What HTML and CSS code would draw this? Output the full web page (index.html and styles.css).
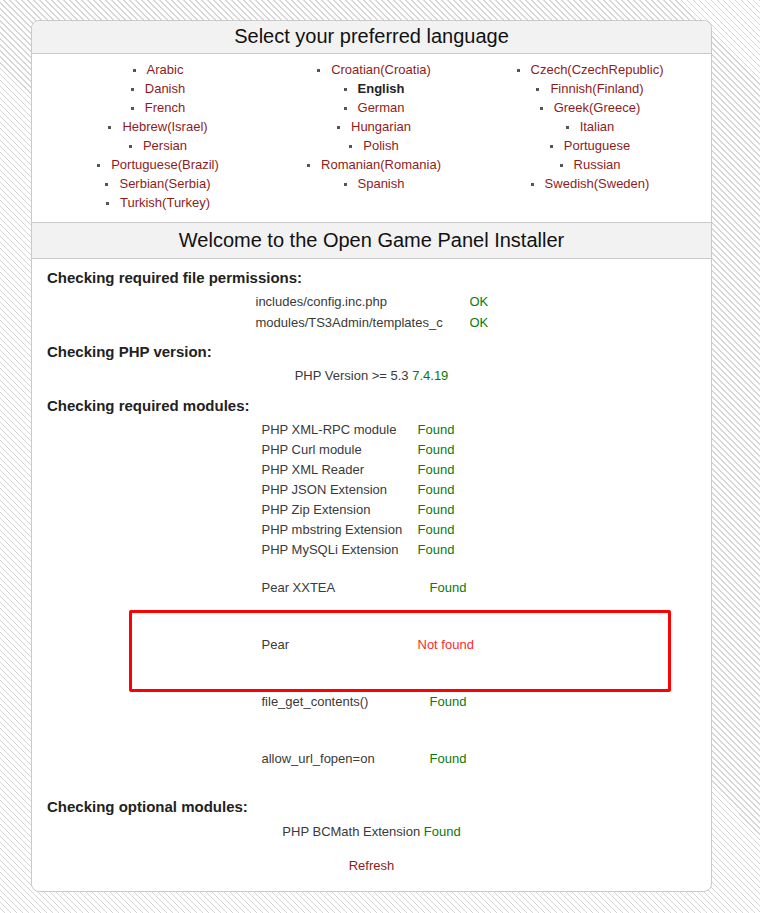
FILE: index.html
```html
<!DOCTYPE html>
<html lang="en">

<head>
    <meta charset="UTF-8">
    <meta name="viewport" content="width=device-width, initial-scale=1.0">
    <title>Open Game Panel Installer</title>
    <link rel="stylesheet" href="styles.css">
</head>

<body>
    <div class="page">
        <div class="panel">
            <div class="panel-head">Select your preferred language</div>
            <div class="langs">
                <ul>
                    <li><a href="#">Arabic</a></li>
                    <li><a href="#">Danish</a></li>
                    <li><a href="#">French</a></li>
                    <li><a href="#">Hebrew(Israel)</a></li>
                    <li><a href="#">Persian</a></li>
                    <li><a href="#">Portuguese(Brazil)</a></li>
                    <li><a href="#">Serbian(Serbia)</a></li>
                    <li><a href="#">Turkish(Turkey)</a></li>
                </ul>
                <ul>
                    <li><a href="#">Croatian(Croatia)</a></li>
                    <li class="current">English</li>
                    <li><a href="#">German</a></li>
                    <li><a href="#">Hungarian</a></li>
                    <li><a href="#">Polish</a></li>
                    <li><a href="#">Romanian(Romania)</a></li>
                    <li><a href="#">Spanish</a></li>
                </ul>
                <ul>
                    <li><a href="#">Czech(CzechRepublic)</a></li>
                    <li><a href="#">Finnish(Finland)</a></li>
                    <li><a href="#">Greek(Greece)</a></li>
                    <li><a href="#">Italian</a></li>
                    <li><a href="#">Portuguese</a></li>
                    <li><a href="#">Russian</a></li>
                    <li><a href="#">Swedish(Sweden)</a></li>
                </ul>
            </div>

            <div class="panel-head second">Welcome to the Open Game Panel Installer</div>
            <div class="checks">
                <h4 class="first">Checking required file permissions:</h4>
                <div class="results perms">
                    <span>includes/config.inc.php</span><span class="ok">OK</span>
                    <span>modules/TS3Admin/templates_c</span><span class="ok">OK</span>
                </div>

                <h4>Checking PHP version:</h4>
                <p class="line">PHP Version &gt;= 5.3 <span class="ok">7.4.19</span></p>

                <h4>Checking required modules:</h4>
                <div class="results modules">
                    <span>PHP XML-RPC module</span><span class="ok">Found</span>
                    <span>PHP Curl module</span><span class="ok">Found</span>
                    <span>PHP XML Reader</span><span class="ok">Found</span>
                    <span>PHP JSON Extension</span><span class="ok">Found</span>
                    <span>PHP Zip Extension</span><span class="ok">Found</span>
                    <span>PHP mbstring Extension</span><span class="ok">Found</span>
                    <span>PHP MySQLi Extension</span><span class="ok">Found</span>
                </div>

                <div class="results extra xxtea">
                    <span>Pear XXTEA</span><span class="ok">Found</span>
                </div>

                <div class="flagged">
                    <div class="results modules pear">
                        <span>Pear</span><span class="fail">Not found</span>
                    </div>
                    <div class="flag-box"></div>
                </div>

                <div class="results extra spaced">
                    <span>file_get_contents()</span><span class="ok">Found</span>
                </div>

                <div class="results extra spaced">
                    <span>allow_url_fopen=on</span><span class="ok">Found</span>
                </div>

                <h4 class="optional">Checking optional modules:</h4>
                <p class="line">PHP BCMath Extension <span class="ok">Found</span></p>

                <p class="refresh"><a href="#">Refresh</a></p>
            </div>
        </div>
    </div>
</body>

</html>
```

FILE: styles.css
```css
body {
    margin: 0;
    font-family: 'Liberation Sans', Arial, sans-serif;
    font-size: 13px;
    color: #3a3a3a;
    background-color: #fff;
    background-image: repeating-linear-gradient(45deg, #fff 0, #fff 3.2px, #d6d6d6 3.2px, #d6d6d6 4.24px);
    min-height: 913px;
}

a {
    color: #8e1c1c;
    text-decoration: none;
}

.page {
    padding: 20px 0 0 31px;
}

.panel {
    width: 679px;
    background: #fff;
    border: 1px solid #cacaca;
    border-radius: 8px;
    overflow: hidden;
}

.panel-head {
    background: #f2f2f2;
    border-bottom: 1px solid #cacaca;
    height: 32px;
    line-height: 30px;
    text-align: center;
    font-size: 20px;
    color: #111;
}

.panel-head.second {
    border-top: 1px solid #cacaca;
    height: 35px;
    line-height: 35px;
}

/* language picker */
.langs {
    display: grid;
    grid-template-columns: 216px 216px 216px;
    padding: 6px 0 10px 18px;
}

.langs ul {
    list-style: square inside;
    margin: 0;
    padding: 0;
    text-align: center;
}

.langs li {
    height: 19px;
    line-height: 19px;
}

.langs li::marker {
    color: #555;
    font-size: 10px;
}

.langs li.current {
    font-weight: bold;
    color: #222;
}

/* installer checks */
.checks {
    padding: 9px 15px 15px;
}

.checks h4 {
    margin: 9px 0 4px;
    font-size: 15px;
    line-height: 20px;
    color: #222;
}

.checks h4.first {
    margin-top: 0;
    margin-bottom: 3px;
}

.checks h4.optional {
    margin-top: 28px;
    margin-bottom: 5px;
}

.results {
    display: grid;
    justify-content: center;
    line-height: 20px;
}

.results.perms {
    grid-template-columns: 214px 18px;
    line-height: 21px;
    margin-bottom: 9px;
}

.results.perms span {
    white-space: nowrap;
    overflow: hidden;
}

.results.modules {
    grid-template-columns: 156px 64px;
}

.results.extra {
    grid-template-columns: 168px 52px;
}

.results.xxtea {
    margin-top: 18px;
}

.results.spaced {
    margin-top: 37px;
}

.flagged {
    position: relative;
    margin-top: 37px;
}

.flag-box {
    position: absolute;
    left: 82px;
    top: -25px;
    width: 536px;
    height: 76px;
    border: 3px solid #ff0000;
    border-radius: 2px;
}

.line {
    margin: 0 0 10px;
    text-align: center;
    line-height: 20px;
}

.refresh {
    margin: 14px 0 0;
    text-align: center;
    line-height: 20px;
}

.ok {
    color: #0a7a0a;
}

.fail {
    color: #ff2a2a;
}
```
